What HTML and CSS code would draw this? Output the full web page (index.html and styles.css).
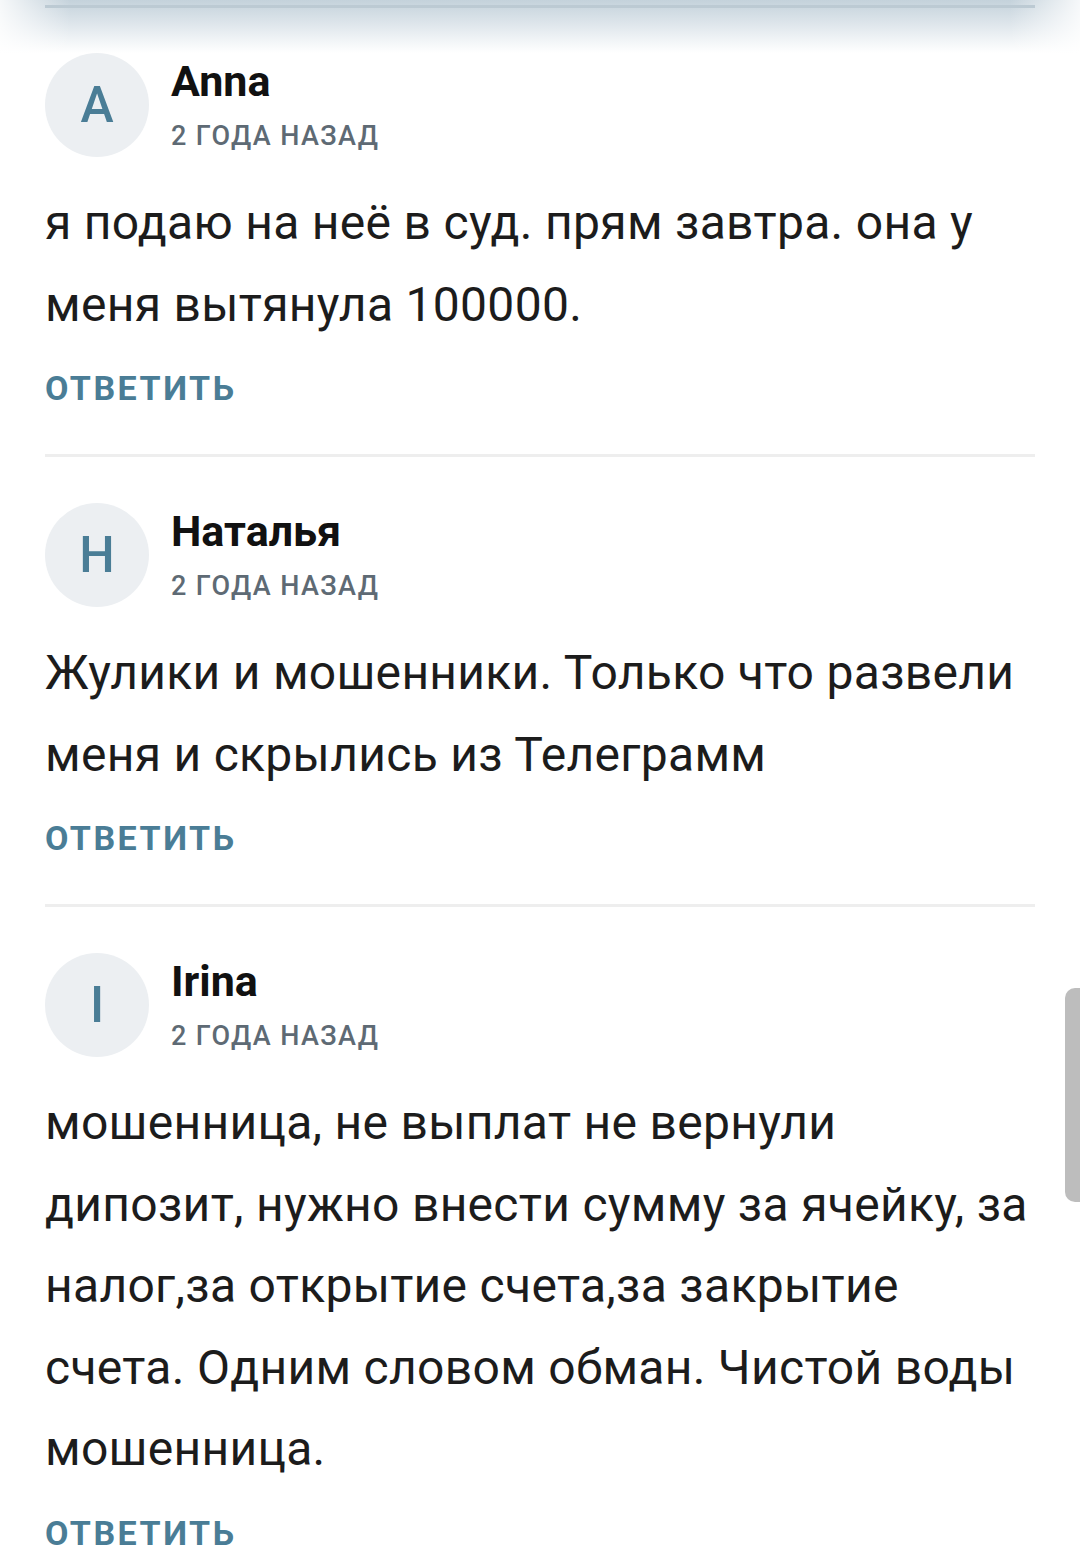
FILE: index.html
```html
<!DOCTYPE html>
<html lang="ru">
<head>
  <meta charset="UTF-8" />
  <title>Комментарии</title>
  <meta name="viewport" content="width=device-width, initial-scale=1.0" />
  <link rel="stylesheet" href="styles.css">
</head>
<body>
  <div class="top-shade"><div class="top-line"></div></div>

  <div class="comments">
    <div class="comment">
      <div class="head">
        <div class="avatar">A</div>
        <div class="meta">
          <div class="name">Anna</div>
          <div class="date">2 года назад</div>
        </div>
      </div>
      <p class="text">я подаю на неё в суд. прям завтра. она у меня вытянула 100000.</p>
      <a class="reply" href="#">Ответить</a>
    </div>

    <div class="comment">
      <div class="head">
        <div class="avatar">Н</div>
        <div class="meta">
          <div class="name">Наталья</div>
          <div class="date">2 года назад</div>
        </div>
      </div>
      <p class="text">Жулики и мошенники. Только что развели меня и скрылись из Телеграмм</p>
      <a class="reply" href="#">Ответить</a>
    </div>

    <div class="comment">
      <div class="head">
        <div class="avatar">I</div>
        <div class="meta">
          <div class="name">Irina</div>
          <div class="date">2 года назад</div>
        </div>
      </div>
      <p class="text">мошенница, не выплат не вернули дипозит, нужно внести сумму за ячейку, за налог,за открытие счета,за закрытие счета. Одним словом обман. Чистой воды мошенница.</p>
      <a class="reply" href="#">Ответить</a>
    </div>
  </div>

  <div class="scrollbar"></div>
</body>
</html>
```

FILE: styles.css
```css
body { margin: 0; background: #fff; font-family: Roboto, "Noto Sans", sans-serif; color: #1c1c1c; overflow: hidden; }
.top-shade { height: 53px; position: relative; background:
  linear-gradient(to right, rgba(255,255,255,0.85), rgba(255,255,255,0) 70px, rgba(255,255,255,0) 1010px, rgba(255,255,255,0.85)),
  linear-gradient(to bottom, #c4d2db, #dce4ea 22px, #f3f6f8 42px, #fff 53px); }
.top-line { position: absolute; top: 5px; left: 45px; right: 45px; height: 3px; background: #bccad3; }
.comments { padding: 0 45px; }
.comment { border-bottom: 3px solid #eeeeee; padding: 0 0 46px; }
.comment + .comment { padding-top: 46px; }
.comment:last-child { border-bottom: none; }
.head { display: flex; align-items: center; gap: 22px; }
.avatar { width: 104px; height: 104px; border-radius: 50%; background: #eceff2; color: #4a7d96; font-size: 50px; font-weight: 500; display: flex; align-items: center; justify-content: center; }
.meta { display: flex; flex-direction: column; margin-top: 2px; }
.name { font-size: 43px; font-weight: 700; color: #111; line-height: 50px; }
.date { font-size: 27px; font-weight: 500; color: #5e6a74; letter-spacing: 1.4px; text-transform: uppercase; line-height: 40px; margin-top: 10px; }
.text { font-size: 48px; line-height: 81.5px; letter-spacing: 0.3px; margin: 25px 0 0; }
.reply { display: block; margin-top: 23px; font-size: 34px; line-height: 40px; font-weight: 700; color: #4a7d96; letter-spacing: 2.5px; text-transform: uppercase; text-decoration: none; }
.scrollbar { position: absolute; right: 0; top: 988px; width: 15px; height: 214px; background: #bdbdbd; border-radius: 10px 0 0 10px; }
```
